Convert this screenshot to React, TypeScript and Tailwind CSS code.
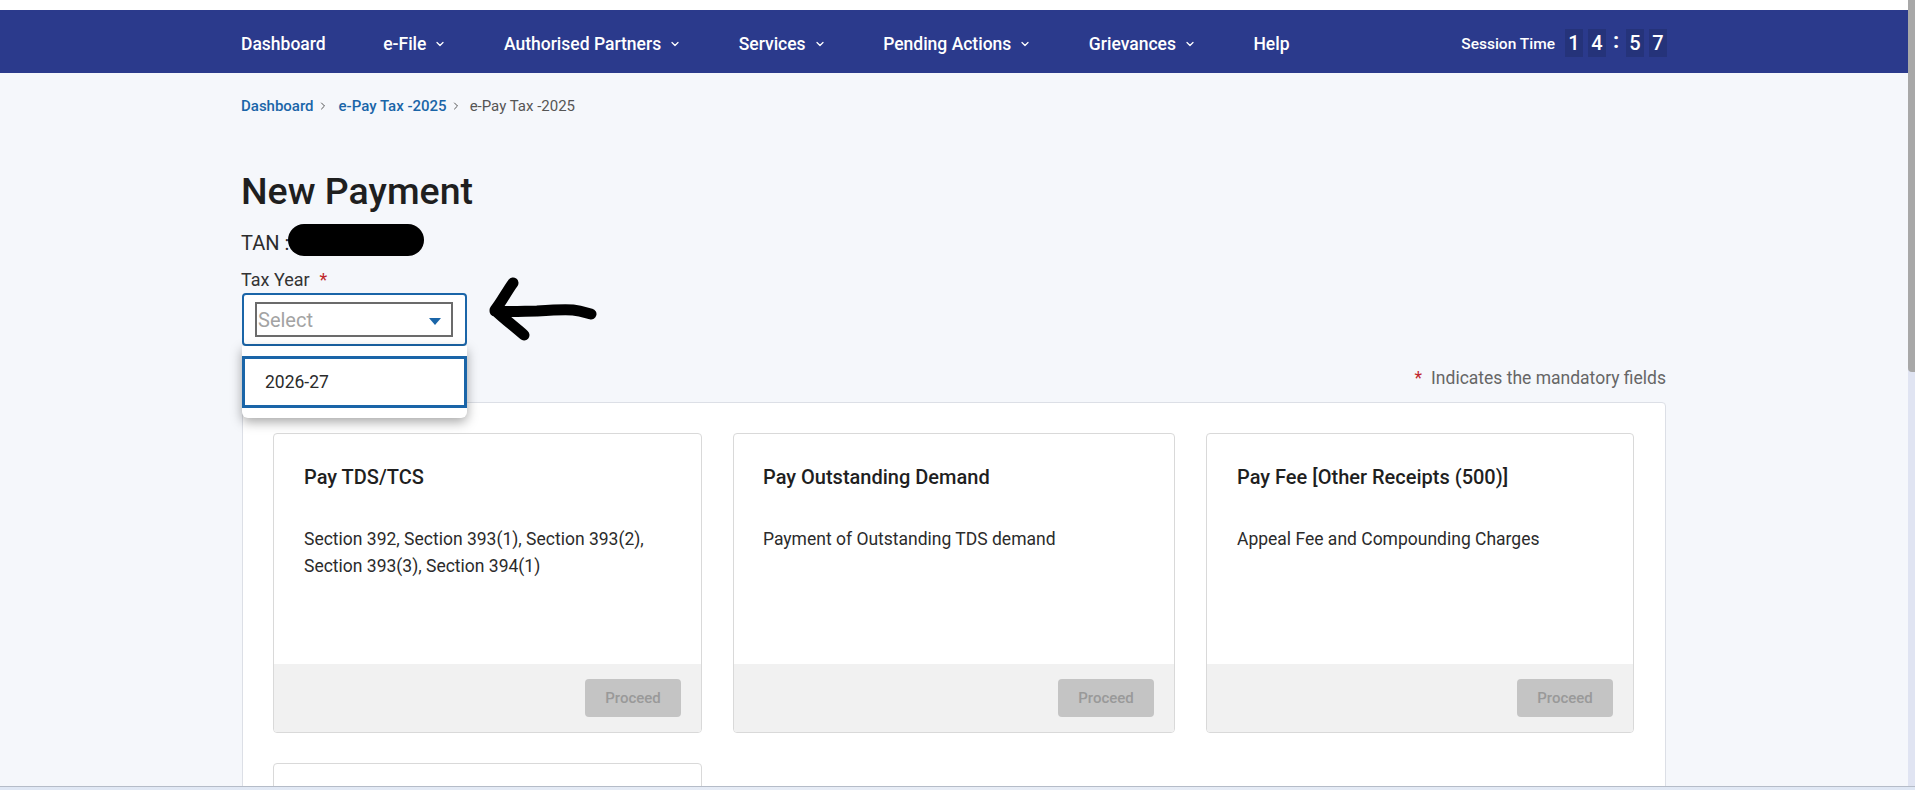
import { ChevronDown, ChevronRight } from "lucide-react";

const navItems = ["e-File", "Authorised Partners", "Services", "Pending Actions", "Grievances"];

const cards = [
  {
    title: "Pay TDS/TCS",
    body: "Section 392, Section 393(1), Section 393(2), Section 393(3), Section 394(1)",
    pad: "pl-[30px]",
  },
  {
    title: "Pay Outstanding Demand",
    body: "Payment of Outstanding TDS demand",
    pad: "pl-[29px]",
  },
  {
    title: "Pay Fee [Other Receipts (500)]",
    body: "Appeal Fee and Compounding Charges",
    pad: "pl-[30px]",
  },
];

function Digit({ value }: { value: string }) {
  return (
    <span className="flex h-[28px] w-[18px] items-center justify-center bg-[#25337a] text-[20px] font-medium text-white">
      {value}
    </span>
  );
}

function PayCard({ title, body, pad }: { title: string; body: string; pad: string }) {
  return (
    <div className="flex h-[300px] flex-col overflow-hidden rounded-[4px] border border-[#d9d9d9] bg-white">
      <div className={`flex-1 pr-[40px] pt-[29px] ${pad}`}>
        <h3 className="text-[20px] leading-[28px] font-medium text-[#1f1f1f]">{title}</h3>
        <p className="mt-[35px] text-[17.5px] leading-[27px] text-[#2b2b2b]">{body}</p>
      </div>
      <div className="flex h-[68px] items-start justify-end bg-[#f1f1f1] pr-[20px] pt-[15px]">
        <button className="h-[38px] w-[96px] rounded-[4px] bg-[#c4c4c4] text-[15px] font-medium text-[#999999]">
          Proceed
        </button>
      </div>
    </div>
  );
}

export default function App() {
  return (
    <div className="flex h-[790px] w-[1915px] flex-col overflow-hidden bg-white font-['Roboto',sans-serif]">
      <div className="flex min-h-0 flex-1">
        <div className="min-w-0 flex-1 overflow-hidden bg-[#f5f7fb]">
          <div className="h-[10px] bg-white" />
          <nav className="flex h-[63px] items-center bg-[#2b3a8c] pl-[241px] pt-[3px] text-white">
            <a className="pt-[2px] text-[17.5px] font-medium">Dashboard</a>
            {navItems.map((label) => (
              <a key={label} className="ml-[57.5px] flex items-center pt-[2px] text-[17.5px] font-medium">
                {label}
                <ChevronDown className="ml-[8px] h-[12px] w-[12px]" strokeWidth={2.5} />
              </a>
            ))}
            <a className="ml-[57.5px] pt-[2px] text-[17.5px] font-medium">Help</a>
            <div className="ml-auto mr-[241px] flex items-center">
              <span className="mr-[10px] pt-[3px] text-[15.5px] font-medium">Session Time</span>
              <div className="flex items-center gap-[5px]">
                <Digit value="1" />
                <Digit value="4" />
                <span className="w-[10px] pb-[6px] text-center text-[22px] font-bold">:</span>
                <Digit value="5" />
                <Digit value="7" />
              </div>
            </div>
          </nav>

          <div className="ml-[241px] w-[1425px]">
            <div className="mt-[23px] flex h-[20px] items-center text-[15px] font-medium text-[#1a65a8]">
              <a>Dashboard</a>
              <ChevronRight className="ml-[3px] mr-[10px] h-[12px] w-[12px] text-[#555]" />
              <a>e-Pay Tax -2025</a>
              <ChevronRight className="ml-[3px] mr-[8px] h-[12px] w-[12px] text-[#555]" />
              <span className="font-normal text-[#555]">e-Pay Tax -2025</span>
            </div>

            <h1 className="mt-[52px] text-[37.5px] leading-[46px] font-medium text-[#1f1f1f]">New Payment</h1>

            <div className="relative mt-[12px] h-[32px] text-[20px] leading-[34px] text-[#2b2b2b]">
              TAN :
              <span className="absolute left-[47px] top-[-2px] h-[32px] w-[136px] rounded-full bg-black" />
            </div>

            <div className="relative">
              <label className="mt-[8px] block h-[26px] text-[18px] leading-[28px] text-[#333]">
                Tax Year<span className="ml-[10px] text-[#c0272d]">*</span>
              </label>
              <div className="ml-[1px] mt-[1px] flex h-[53px] w-[225px] items-center rounded-[4px] border-2 border-[#1a65a8] bg-white pl-[11px]">
                <div className="flex h-[35px] w-[198px] items-center justify-between border-2 border-[#6b6b6b] pl-[1px] pr-[10px]">
                  <span className="text-[20px] text-[#a3a3a3]">Select</span>
                  <span className="mt-[3px] h-0 w-0 border-x-[6.5px] border-t-[7px] border-x-transparent border-t-[#1a65a8]" />
                </div>
              </div>

              {/* hand drawn arrow on the screenshot */}
              <svg className="absolute left-[240px] top-[5px] h-[80px] w-[120px]" viewBox="0 0 120 80" fill="none">
                <path
                  d="M32 12 C26 20 20 32 14 39 C22 47 34 56 43 64 M14 40 C30 41 44 40 56 40 C70 39 84 38 92 39 C100 40 106 42 110 43"
                  stroke="#000"
                  strokeWidth="11"
                  strokeLinecap="round"
                  strokeLinejoin="round"
                />
              </svg>

              {/* open list lies over the panel */}
              <div className="absolute left-[1px] top-[80px] z-10 h-[72px] w-[225px] rounded-b-[6px] bg-white pt-[10px] shadow-[0_4px_12px_rgba(0,0,0,0.35)]">
                <div className="flex h-[52px] items-center border-[3px] border-[#1a65a8] pl-[20px] text-[17.5px] text-[#2b2b2b]">
                  2026-27
                </div>
              </div>
            </div>

            <div className="mt-[20px] flex h-[24px] items-center justify-end text-[17.5px] text-[#666]">
              <span className="mr-[9px] text-[#c0272d]">*</span>
              Indicates the mandatory fields
            </div>

            <div className="ml-[1px] mt-[12px] h-[500px] rounded-[4px] border border-[#dcdfe6] bg-white pl-[30px] pt-[30px]">
              <div className="grid grid-cols-[429px_442px_428px] gap-x-[31px] gap-y-[30px]">
                {cards.map((c) => (
                  <PayCard key={c.title} {...c} />
                ))}
                <div className="h-[100px] rounded-[4px] border border-[#d9d9d9] bg-white" />
              </div>
            </div>
          </div>
        </div>

        {/* scrollbar */}
        <div className="w-[7px] bg-[#e0e4f2]">
          <div className="h-[372px] rounded-bl-[4px] bg-[#a8a8a8]" />
        </div>
      </div>
      <div className="h-[4px] border-t border-[#b5bcc8] bg-gradient-to-r from-[#dfe7f4] via-[#e8edf6] to-[#dfe7f4]" />
    </div>
  );
}
